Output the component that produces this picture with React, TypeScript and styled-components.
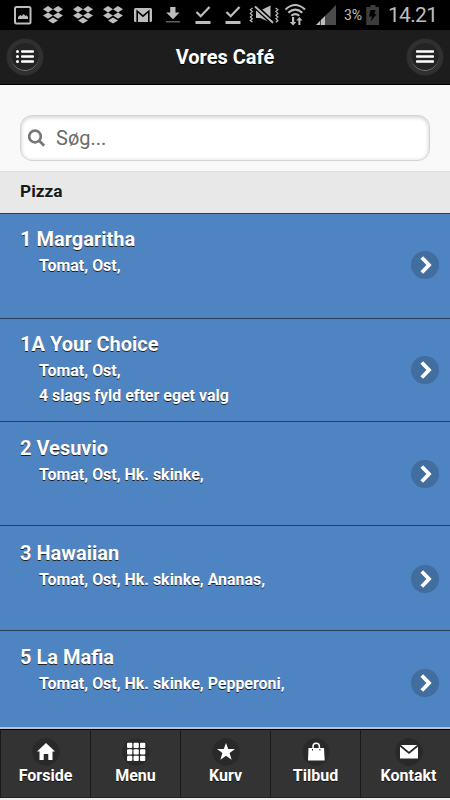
import React from 'react';
import styled, { createGlobalStyle } from 'styled-components';

const GlobalStyle = createGlobalStyle`
  * { box-sizing: border-box; }
  body { margin: 0; background: #f9f9f9; }
`;

const Screen = styled.div`
  display: flex;
  flex-direction: column;
  width: 450px;
  height: 800px;
  overflow: hidden;
  background: #f9f9f9;
  font-family: Roboto, 'Liberation Sans', sans-serif;
`;

const StatusBar = styled.div`
  display: flex;
  flex: none;
  align-items: center;
  height: 30px;
  padding-left: 8px;
  background: #000;
  color: #bdbdbd;
`;

const StatusIcon = styled.svg<{ $width?: number }>`
  display: block;
  flex: none;
  width: ${({ $width }) => $width ?? 30}px;
  height: 30px;
  fill: currentColor;
`;

const BatteryLevel = styled.span`
  width: 24px;
  padding-left: 4px;
  font-size: 14px;
  line-height: 32px;
  letter-spacing: -0.2px;
  white-space: nowrap;
`;

const Clock = styled.span`
  padding-left: 6px;
  font-size: 21px;
  line-height: 32px;
  letter-spacing: -0.7px;
  white-space: nowrap;
`;

const Header = styled.header`
  display: flex;
  flex: none;
  align-items: center;
  justify-content: space-between;
  height: 55px;
  padding: 0 7px;
  border-bottom: 1px solid #000;
  background: #1d1d1d;
`;

const Title = styled.h1`
  margin: 0;
  color: #fff;
  font-size: 20px;
  font-weight: 700;
  line-height: 26px;
  text-shadow: 0 1px 0 #000;
`;

const RoundButton = styled.button`
  display: flex;
  align-items: center;
  justify-content: center;
  width: 36px;
  height: 36px;
  margin-top: -1px;
  padding: 0;
  border: 4px solid #303030;
  border-radius: 50%;
  background: #242424;
  box-shadow: inset 0 -1px 0 #777, 0 0 2px #333;
`;

const ButtonIcon = styled.svg`
  display: block;
  flex: none;
  fill: #fff;
`;

const SearchArea = styled.div`
  flex: none;
  height: 86px;
  padding: 30px 20px 0;
`;

const SearchField = styled.label`
  display: flex;
  align-items: center;
  height: 46px;
  padding-left: 7px;
  border: 1px solid #d3d3d3;
  border-radius: 12px;
  background: #fff;
  box-shadow: inset 0 1px 4px rgba(0, 0, 0, 0.22);
`;

const SearchInput = styled.input`
  width: 340px;
  margin-left: 10px;
  padding: 0;
  border: 0;
  outline: 0;
  background: none;
  font: 400 20px/28px Roboto, 'Liberation Sans', sans-serif;
  &::placeholder { color: #6b6b6b; opacity: 1; }
`;

const SectionTitle = styled.h2`
  flex: none;
  height: 42px;
  margin: 0;
  padding-left: 20px;
  border-top: 1px solid #dedede;
  background: #e8e8e8;
  color: #181818;
  font-size: 17.3px;
  font-weight: 700;
  line-height: 39px;
  text-shadow: 0 1px 0 #eee;
`;

const List = styled.ul`
  display: grid;
  flex: none;
  grid-template-rows: 105px 103px 104px 105px 97px;
  height: 514px;
  margin: 0;
  padding: 0;
  list-style: none;
`;

const Row = styled.li`
  display: flex;
  align-items: flex-start;
  justify-content: space-between;
  padding: 11px 11px 0 20px;
  border-top: 1px solid #263f5c;
  background: #4f84c2;
  color: #fff;
  font-weight: 700;
  text-shadow: 0 1px 0 #222;

  &:nth-child(n + 3) { padding-top: 12px; }
  &:nth-child(4) { padding-top: 13px; }
`;

const DishName = styled.div`
  font-size: 20px;
  line-height: 28px;
`;

const Detail = styled.div`
  padding-left: 19px;
  font-size: 15.95px;
  line-height: 25px;
`;

const Arrow = styled.svg`
  display: block;
  flex: none;
  width: 28px;
  height: 28px;
  margin-top: 26px;
`;

const Footer = styled.nav`
  display: grid;
  flex: none;
  grid-template-columns: repeat(4, 90px) 96px;
  width: 456px;
  height: 73px;
  border-top: 2px solid #bfc2cb;
  border-bottom: 2px solid #eeeeee;
  background: #333;
`;

const Tab = styled.a`
  display: flex;
  flex-direction: column;
  align-items: center;
  padding-top: 8px;
  border-top: 1px solid #000;
  border-bottom: 1px solid #222;
  border-left: 1px solid #191919;
  color: #fff;
  font-size: 16px;
  font-weight: 700;
  line-height: 20px;
  text-shadow: 0 1px 0 #111;
`;

const TabIcon = styled.svg`
  display: block;
  width: 28px;
  height: 28px;
  fill: #fff;
`;

const Dropbox = () => (
  <StatusIcon viewBox="0 0 30 30">
    <path d="M10 6l5 3.2-5 3.2-5-3.2zM20 6l5 3.2-5 3.2-5-3.2zM10 12.4l5 3.2-5 3.2-5-3.2zM20 12.4l5 3.2-5 3.2-5-3.2zM15 17.5l5 3-5 3-5-3z" />
  </StatusIcon>
);

const Check = () => (
  <StatusIcon viewBox="0 0 30 30">
    <path d="M8.5 12l4.2 4.2L21.5 7" fill="none" stroke="currentColor" strokeWidth="2.3" />
    <path d="M7.5 21h15v3h-15z" />
  </StatusIcon>
);

const StatusIcons = () => (
  <>
    <StatusIcon viewBox="0 0 30 30">
      <rect x="7" y="7" width="15.5" height="16.5" rx="1.5" fill="none" stroke="currentColor" strokeWidth="2" />
      <path d="M10 19v-2l2.2-2 1.6 1 2-2 1.7 2 1.2-.8 1.3 1.8v2z" />
    </StatusIcon>
    <Dropbox /><Dropbox /><Dropbox />
    <StatusIcon viewBox="0 0 30 30">
      <rect x="6" y="8" width="18" height="14" rx="1.5" />
      <path d="M9.2 22V11.2l5.8 5 5.8-5V22" fill="none" stroke="#000" strokeWidth="1.6" />
    </StatusIcon>
    <StatusIcon viewBox="0 0 30 30">
      <path d="M12.2 7h5.3v5.6h4L15 19.2l-6.8-6.6h4z" />
      <path d="M8 21h14v1.5H8z" opacity=".5" />
    </StatusIcon>
    <Check /><Check />
    <StatusIcon $width={32} viewBox="0 0 32 30">
      <path d="M8 10.5h4.3L22.5 5.5v17L12.3 18H8z" />
      <path d="M7 6l18 17" stroke="#000" strokeWidth="5" />
      <path d="M7 6.5l18 16.3" stroke="currentColor" strokeWidth="1.9" />
      <path d="M4.5 8L2.3 9.8l2 1.8-2 1.8 2 1.8-2 1.8 2 1.8-2 1.8L4.5 22M27.7 8l2.2 1.8-2 1.8 2 1.8-2 1.8 2 1.8-2 1.8 2 1.8-2.2 1.6" fill="none" stroke="currentColor" strokeWidth="1.2" />
    </StatusIcon>
    <StatusIcon viewBox="0 0 30 30">
      <path d="M5.5 9.5q9.7-9 19.5 0M8.3 12.8q7-6.2 14 0M11.3 15.8q4-3.2 8 0" fill="none" stroke="currentColor" strokeWidth="2.1" />
      <path d="M12 17v5h-2.2l3.3 3.5 3.2-3.5h-2.1v-5zM16.3 20.5l3.1-3.4 3.1 3.4h-2.1V25h-2v-4.5z" />
    </StatusIcon>
    <StatusIcon viewBox="0 0 30 30">
      <path d="M26 5v20H6z" fill="#4b4b4b" />
      <path d="M15 16v9H6z" />
      <path d="M10.5 18v7" stroke="#000" strokeWidth=".6" />
    </StatusIcon>
    <BatteryLevel>3%</BatteryLevel>
    <StatusIcon $width={18} viewBox="0 0 18 30">
      <path d="M6.5 5h5v2h3.5v18H2.2V7h4.3z" fill="#3c3c3c" />
      <path d="M6.5 10h5l-1.2 4.1h2.5L6.6 21.5l1.4-5H5z" fill="#000" />
    </StatusIcon>
    <Clock>14.21</Clock>
  </>
);

const dishes = [
  { name: '1 Margaritha', details: ['Tomat, Ost,'] },
  { name: '1A Your Choice', details: ['Tomat, Ost,', '4 slags fyld efter eget valg'] },
  { name: '2 Vesuvio', details: ['Tomat, Ost, Hk. skinke,'] },
  { name: '3 Hawaiian', details: ['Tomat, Ost, Hk. skinke, Ananas,'] },
  { name: '5 La Mafia', details: ['Tomat, Ost, Hk. skinke, Pepperoni,'] },
];

const tabs = [
  { label: 'Forside', icon: <path d="M14 5L5 13.5h2.5V22h4.2v-6h4.6v6h4.2v-8.5H23z" /> },
  {
    label: 'Menu',
    icon: [5, 11.5, 18].flatMap((y) =>
      [5, 11.5, 18].map((x) => <rect key={`${x}-${y}`} x={x} y={y - 0.3} width="5.3" height="5.3" rx="1" />),
    ),
  },
  { label: 'Kurv', icon: <path d="M14 5l2.2 6H23l-5.4 4.1 2 6.6L14 17.8l-5.6 3.9 2-6.6L5 11h6.8z" /> },
  {
    label: 'Tilbud',
    icon: (
      <>
        <path d="M6.5 10H22l.7 12.5H6z" />
        <path d="M11 12V8.5q0-3.2 3.2-3.2t3.2 3.2V12" fill="none" stroke="#fff" strokeWidth="1.5" />
        <path d="M10.5 11v1.5M17.9 11v1.5" stroke="#222" />
      </>
    ),
  },
  {
    label: 'Kontakt',
    icon: (
      <>
        <rect x="5" y="7" width="18" height="13.5" />
        <path d="M5 7.5l9 7.3 9-7.3" fill="none" stroke="#222" strokeWidth="1.7" />
      </>
    ),
  },
];

export default function App() {
  return (
    <Screen>
      <GlobalStyle />
      <StatusBar><StatusIcons /></StatusBar>
      <Header>
        <RoundButton aria-label="Kategorier">
          <ButtonIcon width="20" height="16" viewBox="0 0 20 16">
            {[2.5, 7.5, 12.5].map((y) => (
              <React.Fragment key={y}>
                <circle cx="2.5" cy={y} r="1.5" />
                <rect x="6" y={y - 1.3} width="13" height="2.6" rx="1" />
              </React.Fragment>
            ))}
          </ButtonIcon>
        </RoundButton>
        <Title>Vores Café</Title>
        <RoundButton aria-label="Menu">
          <ButtonIcon width="20" height="16" viewBox="0 0 20 16">
            {[2.5, 7.5, 12.5].map((y) => <rect key={y} x="1" y={y - 1.3} width="18" height="2.6" rx="0.8" />)}
          </ButtonIcon>
        </RoundButton>
      </Header>
      <SearchArea>
        <SearchField>
          <svg width="18" height="18" viewBox="0 0 18 18" fill="none" stroke="#777" strokeWidth="2.7">
            <circle cx="7" cy="7.5" r="5.8" />
            <path d="M11 11.5l5.2 5.2" />
          </svg>
          <SearchInput placeholder="Søg..." />
        </SearchField>
      </SearchArea>
      <SectionTitle>Pizza</SectionTitle>
      <List>
        {dishes.map((dish) => (
          <Row key={dish.name}>
            <div>
              <DishName>{dish.name}</DishName>
              {dish.details.map((line) => <Detail key={line}>{line}</Detail>)}
            </div>
            <Arrow viewBox="0 0 28 28">
              <circle cx="14" cy="14" r="14" fill="#416d9f" />
              <path d="M10.8 6.5l7.2 7.5-7.2 7.5" fill="none" stroke="#fff" strokeWidth="3.8" />
            </Arrow>
          </Row>
        ))}
      </List>
      <Footer>
        {tabs.map((tab) => (
          <Tab key={tab.label}>
            <TabIcon viewBox="0 0 28 28">
              <circle cx="14" cy="14" r="13.7" fill="#292929" />
              {tab.icon}
            </TabIcon>
            {tab.label}
          </Tab>
        ))}
      </Footer>
    </Screen>
  );
}
